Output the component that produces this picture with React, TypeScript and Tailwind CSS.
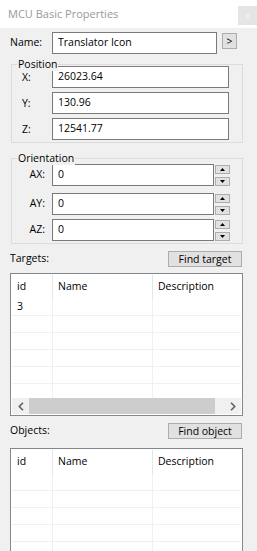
import React from "react";

const Input = ({ value, w }: { value: string; w: string }) => (
  <div className={`${w} h-[22px] border border-[#7a7a7a] bg-white flex items-center pl-[5px] shrink-0`}>
    {value}
  </div>
);

const Tri = ({ up }: { up?: boolean }) => (
  <svg width="5" height="3" viewBox="0 0 5 3">
    {up ? <path d="M0 3 L2.5 0 L5 3 Z" fill="#000" /> : <path d="M0 0 L2.5 3 L5 0 Z" fill="#000" />}
  </svg>
);

const Spin = () => (
  <div className="ml-[1px] flex flex-col gap-[3px]">
    <div className="w-[15px] h-[9px] bg-[#e1e1e1] border border-[#adadad] flex items-center justify-center">
      <Tri up />
    </div>
    <div className="w-[15px] h-[9px] bg-[#e1e1e1] border border-[#adadad] flex items-center justify-center">
      <Tri />
    </div>
  </div>
);

const Row = ({ id }: { id?: string }) => (
  <div className="flex h-[17px] border-b border-[#f0f0f0] shrink-0">
    <div className="w-[41px] h-full border-r border-[#f0f0f0] pl-[5px] flex items-center">{id}</div>
    <div className="w-[100px] h-full border-r border-[#f0f0f0]" />
    <div className="flex-1 h-full" />
  </div>
);

const Header = () => (
  <div className="flex h-[25px] shrink-0">
    <div className="w-[41px] mt-[1px] h-[24px] border-r border-[#e5e5e5] pl-[5px] flex items-center">id</div>
    <div className="w-[100px] mt-[1px] h-[24px] border-r border-[#e5e5e5] pl-[5px] flex items-center">Name</div>
    <div className="flex-1 mt-[1px] h-[24px] pl-[5px] flex items-center">Description</div>
  </div>
);

const Chevron = ({ left }: { left?: boolean }) => (
  <svg width="6" height="9" viewBox="0 0 6 9">
    <path
      d={left ? "M5 0.8 L1.3 4.5 L5 8.2" : "M1 0.8 L4.7 4.5 L1 8.2"}
      fill="none"
      stroke="#606060"
      strokeWidth="1.6"
    />
  </svg>
);

const Scrollbar = () => (
  <div className="h-[16px] bg-[#f0f0f0] flex shrink-0">
    <div className="w-[17px] h-full flex items-center justify-center">
      <Chevron left />
    </div>
    <div className="w-[186px] h-full bg-[#cdcdcd]" />
    <div className="flex-1" />
    <div className="w-[17px] h-full flex items-center justify-center">
      <Chevron />
    </div>
  </div>
);

const Button = ({ label }: { label: string }) => (
  <div className="w-[74px] h-[16px] bg-[#e1e1e1] border border-[#adadad] flex items-center justify-center leading-none">
    {label}
  </div>
);

export default function App() {
  return (
    <div className="w-[257px] h-[551px] overflow-hidden bg-[#f0f0f0] text-[10.5px] text-black font-['Segoe_UI','Open_Sans',sans-serif] flex flex-col">
      {/* title bar */}
      <div className="h-[28px] bg-white flex justify-between shrink-0">
        <div className="ml-[8px] h-full flex items-center text-[11px] text-[#999999]">MCU Basic Properties</div>
        <div className="mt-[6px] w-[19px] h-[19px] bg-[#e5e5e5] flex items-center justify-center text-[9px] text-[#f7f7f7] leading-none">
          x
        </div>
      </div>

      {/* name row */}
      <div className="mt-[4px] flex h-[22px] shrink-0">
        <div className="w-[52px] pl-[10px] flex items-center">Name:</div>
        <Input value="Translator Icon" w="w-[165px]" />
        <div className="ml-[5px] mt-[1px] w-[15px] h-[16px] bg-[#e1e1e1] border border-[#adadad] flex items-center justify-center leading-none">
          &gt;
        </div>
      </div>

      {/* position */}
      <div className="relative mt-[10px] ml-[11px] w-[232px] border border-[#dcdcdc] pt-[1px] pb-[2px] flex flex-col gap-[4px] shrink-0">
        <div className="absolute top-[-8px] left-[5px] px-[1px] bg-[#f0f0f0] leading-[14px]">Position</div>
        <div className="flex">
          <div className="w-[40px] pl-[10px] flex items-center pt-[2px]">X:</div>
          <Input value="26023.64" w="w-[177px]" />
        </div>
        <div className="flex">
          <div className="w-[40px] pl-[10px] flex items-center pt-[2px]">Y:</div>
          <Input value="130.96" w="w-[177px]" />
        </div>
        <div className="flex">
          <div className="w-[40px] pl-[10px] flex items-center pt-[2px]">Z:</div>
          <Input value="12541.77" w="w-[177px]" />
        </div>
      </div>

      {/* orientation */}
      <div className="relative mt-[15px] ml-[11px] w-[232px] border border-[#dcdcdc] pt-[5px] pb-[2px] flex flex-col shrink-0">
        <div className="absolute top-[-8px] left-[5px] px-[1px] bg-[#f0f0f0] leading-[14px]">Orientation</div>
        <div className="flex items-center">
          <div className="w-[40px] pr-[7px] text-right">AX:</div>
          <Input value="0" w="w-[162px]" />
          <Spin />
        </div>
        <div className="flex items-center mt-[7px]">
          <div className="w-[40px] pr-[7px] text-right">AY:</div>
          <Input value="0" w="w-[162px]" />
          <Spin />
        </div>
        <div className="flex items-center mt-[4px]">
          <div className="w-[40px] pr-[7px] text-right">AZ:</div>
          <Input value="0" w="w-[162px]" />
          <Spin />
        </div>
      </div>

      {/* targets */}
      <div className="mt-[7px] h-[16px] flex items-center justify-between pl-[10px] pr-[15px] shrink-0">
        <div>Targets:</div>
        <Button label="Find target" />
      </div>
      <div className="mt-[6px] ml-[10px] w-[233px] h-[143px] border border-[#828790] bg-white flex flex-col px-[1px] pb-[1px] shrink-0">
        <div className="flex-1 overflow-hidden flex flex-col">
          <Header />
          <Row id="3" />
          <Row />
          <Row />
          <Row />
          <Row />
          <Row />
        </div>
        <Scrollbar />
      </div>

      {/* objects */}
      <div className="mt-[7px] h-[16px] flex items-center justify-between pl-[10px] pr-[15px] shrink-0">
        <div>Objects:</div>
        <Button label="Find object" />
      </div>
      <div className="mt-[9px] ml-[10px] w-[233px] h-[130px] border border-[#828790] bg-white flex flex-col px-[1px] pb-[1px] shrink-0">
        <div className="flex-1 overflow-hidden flex flex-col">
          <Header />
          <Row />
          <Row />
          <Row />
          <Row />
          <Row />
          <Row />
        </div>
      </div>
    </div>
  );
}
